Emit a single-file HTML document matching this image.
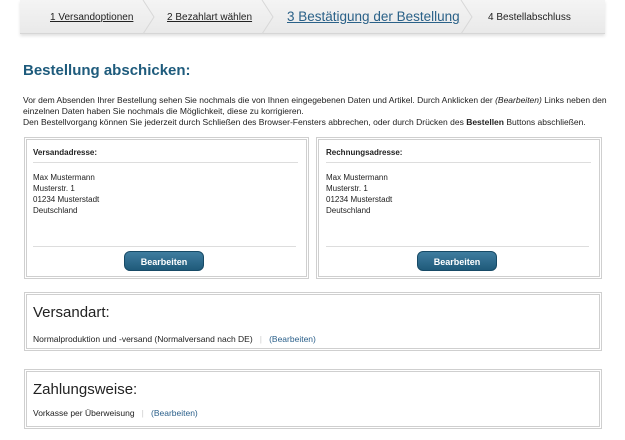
<!DOCTYPE html>
<html><head><meta charset="utf-8"><style>
*{margin:0;padding:0;box-sizing:border-box}
body{width:625px;height:440px;background:#fff;font-family:"Liberation Sans",sans-serif;color:#222;position:relative;overflow:hidden;font-size:8px}
.a{position:absolute;white-space:nowrap}
.nav{position:absolute;left:20px;top:0;width:585px;height:34px;background:linear-gradient(#f4f4f4,#e9e9e9);border-bottom:1px solid #d6d6d6;box-shadow:0 2px 3px rgba(0,0,0,.12)}
.chev{position:absolute;top:0;width:14px;height:34px}
.box{position:absolute;border:3px double #cfcfcf;background:#fff}
.btn{position:absolute;width:80px;height:20px;border-radius:6px;background:linear-gradient(#3f7d9f,#1f5a7a);color:#fff;font-weight:bold;font-size:9px;text-align:center;line-height:20px;border:1px solid #174a66}
.hr{position:absolute;height:1px;background:#ddd}
.lnk{color:#2a5f8a}
</style></head><body>
<div class="nav">
<svg class="chev" style="left:122px" viewBox="0 0 14 34"><path d="M1 0 L12 17 L1 34" fill="none" stroke="#d8d8d8"/></svg>
<svg class="chev" style="left:241px" viewBox="0 0 14 34"><path d="M1 0 L12 17 L1 34" fill="none" stroke="#d8d8d8"/></svg>
<svg class="chev" style="left:440px" viewBox="0 0 14 34"><path d="M1 0 L12 17 L1 34" fill="none" stroke="#d8d8d8"/></svg>
</div>
<div class="a" style="left:50px;top:12px;font-size:10px;text-decoration:underline">1 Versandoptionen</div>
<div class="a" style="left:167px;top:12px;font-size:10px;text-decoration:underline">2 Bezahlart wählen</div>
<div class="a" style="left:287px;top:9px;font-size:13.5px;color:#2a6188;text-decoration:underline">3 Bestätigung der Bestellung</div>
<div class="a" style="left:488px;top:12px;font-size:10px">4 Bestellabschluss</div>
<div class="a" style="left:23px;top:62px;font-size:15px;font-weight:bold;color:#1e5b7c">Bestellung abschicken:</div>
<div class="a" style="left:23px;top:95px;line-height:11px;font-size:8.5px">Vor dem Absenden Ihrer Bestellung sehen Sie nochmals die von Ihnen eingegebenen Daten und Artikel. Durch Anklicken der <i>(Bearbeiten)</i> Links neben den<br>einzelnen Daten haben Sie nochmals die Möglichkeit, diese zu korrigieren.<br>Den Bestellvorgang können Sie jederzeit durch Schließen des Browser-Fensters abbrechen, oder durch Drücken des <b>Bestellen</b> Buttons abschließen.</div>

<div class="box" style="left:24px;top:137px;width:285px;height:142px"></div>
<div class="a" style="left:33px;top:148px;font-weight:bold">Versandadresse:</div>
<div class="hr" style="left:33px;top:162px;width:265px"></div>
<div class="a" style="left:33px;top:172px;line-height:11px">Max Mustermann<br>Musterstr. 1<br>01234 Musterstadt<br>Deutschland</div>
<div class="hr" style="left:33px;top:246px;width:263px"></div>
<div class="btn" style="left:124px;top:251px">Bearbeiten</div>

<div class="box" style="left:316px;top:137px;width:286px;height:142px"></div>
<div class="a" style="left:326px;top:148px;font-weight:bold">Rechnungsadresse:</div>
<div class="hr" style="left:326px;top:162px;width:265px"></div>
<div class="a" style="left:326px;top:172px;line-height:11px">Max Mustermann<br>Musterstr. 1<br>01234 Musterstadt<br>Deutschland</div>
<div class="hr" style="left:326px;top:246px;width:263px"></div>
<div class="btn" style="left:417px;top:251px">Bearbeiten</div>

<div class="box" style="left:24px;top:292px;width:578px;height:59px"></div>
<div class="a" style="left:33px;top:304px;font-size:15px">Versandart:</div>
<div class="a" style="left:33px;top:334px;font-size:8.5px">Normalproduktion und -versand (Normalversand nach DE) &nbsp;&nbsp;<span style="color:#ccc">|</span>&nbsp;&nbsp; <span class="lnk">(Bearbeiten)</span></div>

<div class="box" style="left:24px;top:369px;width:578px;height:60px"></div>
<div class="a" style="left:33px;top:381px;font-size:15px">Zahlungsweise:</div>
<div class="a" style="left:33px;top:408px;font-size:8.5px">Vorkasse per Überweisung &nbsp;&nbsp;<span style="color:#ccc">|</span>&nbsp;&nbsp; <span class="lnk">(Bearbeiten)</span></div>
</body></html>
